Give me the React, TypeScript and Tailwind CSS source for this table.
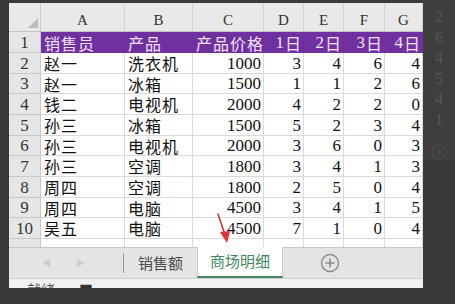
import React from 'react';

const cols = ['A', 'B', 'C', 'D', 'E', 'F', 'G'];

const rows: [string, string, number, number, number, number, number][] = [
  ['赵一', '洗衣机', 1000, 3, 4, 6, 4],
  ['赵一', '冰箱', 1500, 1, 1, 2, 6],
  ['钱二', '电视机', 2000, 4, 2, 2, 0],
  ['孙三', '冰箱', 1500, 5, 2, 3, 4],
  ['孙三', '电视机', 2000, 3, 6, 0, 3],
  ['孙三', '空调', 1800, 3, 4, 1, 3],
  ['周四', '空调', 1800, 2, 5, 0, 4],
  ['周四', '电脑', 4500, 3, 4, 1, 5],
  ['吴五', '电脑', 4500, 7, 1, 0, 4],
];

const grid = 'grid grid-cols-[32px_84px_68px_71px_40px_40px_41px_38px]';
const cjk = "font-['Noto_Sans_CJK_SC',sans-serif]";
const serif = "font-['Liberation_Serif','Noto_Sans_CJK_SC',serif]";

function RowNum({ n }: { n: number }) {
  return (
    <div className={`flex items-center justify-center bg-[#e6e6e6] border-r border-b border-[#c9c9c9] text-[17px] leading-none text-[#333] ${serif}`}>
      {n}
    </div>
  );
}

function TextCell({ v }: { v: string }) {
  return (
    <div className={`flex items-center pl-[3px] border-r border-b border-[#dadada] text-[16px] leading-none text-[#111] whitespace-nowrap ${cjk}`}>
      <span className="tracking-[1px]">{v}</span>
    </div>
  );
}

function NumCell({ v }: { v: number }) {
  return (
    <div className={`flex items-center justify-end pr-[2px] border-r border-b border-[#dadada] text-[17px] leading-none text-[#111] ${serif}`}>
      {v}
    </div>
  );
}

export default function App() {
  return (
    <div className="relative w-[455px] h-[304px] overflow-hidden bg-[#3a3a3a] flex">
      <div className="w-[9px] shrink-0" />

      {/* sheet */}
      <div className="w-[414px] shrink-0 mt-[3px] h-[285px] bg-white flex flex-col">
        {/* column letters */}
        <div className={`${grid} h-[29px] bg-[#e9e9e9] border-b border-[#c4c4c4]`}>
          <div className="relative border-r border-[#c9c9c9]">
            <div className="absolute left-[19px] top-[15px] w-0 h-0 border-l-[10px] border-l-transparent border-b-[10px] border-b-[#bdbdbd]" />
          </div>
          {cols.map((c) => (
            <div key={c} className={`flex items-end justify-center pb-[3px] border-r border-[#d4d4d4] text-[15px] leading-none text-[#333] ${serif}`}>
              {c}
            </div>
          ))}
        </div>

        {/* row 1 header */}
        <div className={`${grid} h-[21px]`}>
          <RowNum n={1} />
          {['销售员', '产品', '产品价格'].map((t) => (
            <div key={t} className={`flex items-center pl-[3px] bg-[#7030a0] text-[16px] leading-none text-[#eee4f6] whitespace-nowrap ${cjk}`}>
              <span className="tracking-[1px]">{t}</span>
            </div>
          ))}
          {['1日', '2日', '3日', '4日'].map((t) => (
            <div key={t} className={`flex items-center justify-end pr-[3px] bg-[#7030a0] text-[16px] leading-none text-[#eee4f6] whitespace-nowrap ${cjk}`}>
              <span className={`${serif} text-[17px] mr-[1px]`}>{t[0]}</span>
              {t.slice(1)}
            </div>
          ))}
        </div>

        {rows.map((r, i) => (
          <div key={i} className={`${grid} ${i % 3 === 1 ? 'h-[20px]' : 'h-[21px]'}`}>
            <RowNum n={i + 2} />
            <TextCell v={r[0]} />
            <TextCell v={r[1]} />
            {r.slice(2).map((v, j) => (
              <NumCell key={j} v={v as number} />
            ))}
          </div>
        ))}

        {/* partial row 11 */}
        <div className={`${grid} h-[8px] overflow-hidden`}>
          <div className="bg-[#e6e6e6] border-r border-[#c9c9c9]" />
          {cols.map((c) => (
            <div key={c} className="border-r border-[#dadada]" />
          ))}
        </div>

        {/* sheet tabs */}
        <div className={`h-[31px] bg-[#e4e4e4] border-t border-[#c8c8c8] flex items-stretch ${cjk}`}>
          <div className="w-[114px] flex items-center text-[#cdcdcd] text-[9px]">
            <span className="ml-[33px]">◀</span>
            <span className="ml-[25px]">▶</span>
          </div>
          <div className="w-px my-[5px] bg-[#9a9a9a]" />
          <div className="w-[73px] flex items-center pl-[14px] text-[15px] text-[#4a4a4a]">销售额</div>
          <div className="w-[86px] -mt-px bg-white border-x border-[#c8c8c8] border-b-2 border-b-[#3f8a5c] flex items-center justify-center text-[15px] text-[#3f8a5c]">
            商场明细
          </div>
          <div className="flex-1 flex items-center pl-[37px]">
            <svg width="20" height="20" viewBox="0 0 20 20">
              <circle cx="10" cy="10" r="8.5" fill="none" stroke="#8a8a8a" strokeWidth="1.4" />
              <path d="M10 5.5v9M5.5 10h9" stroke="#8a8a8a" strokeWidth="1.6" />
            </svg>
          </div>
        </div>

        {/* status bar (cut off) */}
        <div className={`flex-1 bg-[#f1f1f1] border-t border-[#d0d0d0] overflow-hidden text-[14px] leading-none text-[#555] flex items-start ${cjk}`}>
          <span className="ml-[18px] mt-[3px]">就绪</span>
          <span className="ml-[24px] mt-[3px] text-[#333]">■</span>
        </div>
      </div>

      {/* blurred window behind */}
      <div className="flex-1 flex flex-col">
        <div className={`h-[160px] bg-[#3e3e3e] flex flex-col items-center pt-[7px] text-[17px] leading-[20.5px] text-[#565656] ${serif}`}>
          <span>2</span>
          <span>6</span>
          <span>4</span>
          <span>5</span>
          <span>4</span>
          <span>1</span>
          <svg className="mt-[14px]" width="18" height="18" viewBox="0 0 20 20">
            <circle cx="10" cy="10" r="8.5" fill="none" stroke="#4d4d4d" strokeWidth="1.4" />
            <path d="M10 5.5v9M5.5 10h9" stroke="#4d4d4d" strokeWidth="1.6" />
          </svg>
        </div>
      </div>

      {/* red arrow annotation */}
      <svg className="absolute left-[212px] top-[210px]" width="30" height="40" viewBox="0 0 30 40">
        <path d="M6 4 L13 25" stroke="#d8323a" strokeWidth="1.6" strokeLinecap="round" />
        <path d="M8 22 L18 21 L15 33 Z" fill="#e0303a" />
      </svg>
    </div>
  );
}
